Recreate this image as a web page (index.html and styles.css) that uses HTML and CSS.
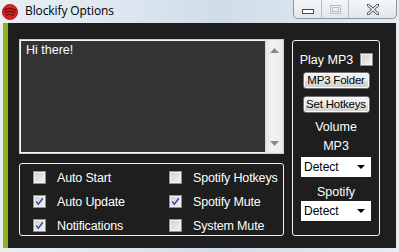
FILE: index.html
```html
<!DOCTYPE html>
<html>
<head>
<meta charset="utf-8">
<link rel="stylesheet" href="styles.css">
</head>
<body>
<div class="window">
  <div class="titlebar">
    <svg class="appicon" width="18" height="18" viewBox="0 0 18 18">
      <circle cx="9" cy="9" r="7.6" fill="#d42424"/>
      <circle cx="9" cy="9" r="7.6" fill="none" stroke="#9a1414" stroke-width="0.8"/>
      <path d="M3.6 6.4 Q9 4.4 14.4 7.2" fill="none" stroke="#7d0f0f" stroke-width="1.6" stroke-linecap="round"/>
      <path d="M4.2 9.2 Q9 7.6 13.6 9.8" fill="none" stroke="#7d0f0f" stroke-width="1.4" stroke-linecap="round"/>
      <path d="M4.8 11.8 Q9 10.6 12.8 12.4" fill="none" stroke="#7d0f0f" stroke-width="1.2" stroke-linecap="round"/>
    </svg>
    <span class="title">Blockify Options</span>
    <div class="caption">
      <div class="cbtn min"><svg width="12" height="5" viewBox="0 0 12 5"><rect x="0.5" y="0.5" width="11" height="4" fill="#fff" stroke="#4a4a4a"/></svg></div>
      <div class="cbtn max"><svg width="11" height="9" viewBox="0 0 11 9"><rect x="0.5" y="0.5" width="10" height="8" fill="none" stroke="#b9bec4"/><rect x="2.5" y="2.5" width="6" height="4" fill="none" stroke="#b9bec4"/></svg></div>
      <div class="cbtn close"><svg width="12" height="11" viewBox="0 0 12 11"><path d="M1 1 L11 10 M11 1 L1 10" stroke="#4a4a4a" stroke-width="3" stroke-linecap="square"/><path d="M1 1 L11 10 M11 1 L1 10" stroke="#fff" stroke-width="1.2"/></svg></div>
    </div>
  </div>
  <div class="frame">
    <div class="client">
      <div class="leftcol">
        <div class="textbox">
          <div class="textarea">Hi there!</div>
          <div class="scrollbar">
            <svg class="arrow" width="9" height="5" viewBox="0 0 9 5"><path d="M4.5 0 L9 5 L0 5Z" fill="#8a8a8a"/></svg>
            <svg class="arrow" width="9" height="5" viewBox="0 0 9 5"><path d="M0 0 L9 0 L4.5 5Z" fill="#8a8a8a"/></svg>
          </div>
        </div>
        <div class="group checks">
          <div class="item"><span class="cb"></span><span>Auto Start</span></div>
          <div class="item"><span class="cb"></span><span>Spotify Hotkeys</span></div>
          <div class="item"><span class="cb on"><svg width="11" height="11" viewBox="0 0 11 11"><path d="M2.2 5.4 L4.4 8.2 L8.8 2.2" fill="none" stroke="#3b54a8" stroke-width="1.6"/></svg></span><span>Auto Update</span></div>
          <div class="item"><span class="cb on"><svg width="11" height="11" viewBox="0 0 11 11"><path d="M2.2 5.4 L4.4 8.2 L8.8 2.2" fill="none" stroke="#3b54a8" stroke-width="1.6"/></svg></span><span>Spotify Mute</span></div>
          <div class="item"><span class="cb on"><svg width="11" height="11" viewBox="0 0 11 11"><path d="M2.2 5.4 L4.4 8.2 L8.8 2.2" fill="none" stroke="#3b54a8" stroke-width="1.6"/></svg></span><span>Notifications</span></div>
          <div class="item"><span class="cb"></span><span>System Mute</span></div>
        </div>
      </div>
      <div class="group panel">
        <div class="playrow"><span>Play MP3</span><span class="cb"></span></div>
        <div class="btn b1">MP3 Folder</div>
        <div class="btn b2">Set Hotkeys</div>
        <div class="lbl l-vol">Volume</div>
        <div class="lbl l-mp3">MP3</div>
        <div class="select s1"><span>Detect</span><svg width="8" height="4" viewBox="0 0 8 4"><path d="M0 0 L8 0 L4 4Z" fill="#000"/></svg></div>
        <div class="lbl l-spot">Spotify</div>
        <div class="select s2"><span>Detect</span><svg width="8" height="4" viewBox="0 0 8 4"><path d="M0 0 L8 0 L4 4Z" fill="#000"/></svg></div>
      </div>
    </div>
  </div>
</div>
</body>
</html>
```
FILE: styles.css
```css
* { box-sizing: border-box; }
html, body { margin: 0; padding: 0; }
body { width: 399px; height: 252px; overflow: hidden; background: #dfe6ec; }

.window {
  width: 399px; height: 252px;
  display: flex; flex-direction: column;
  background: linear-gradient(90deg, #e9eef2 0%, #dde7f0 30%, #cfdde9 55%, #dce6ee 80%, #e6ecf1 100%);
  font-family: "Liberation Sans", Arial, sans-serif;
}

.titlebar {
  height: 23px; flex: none;
  display: flex; align-items: flex-start;
}
.appicon { margin: 3px 0 0 1px; flex: none; }
.title {
  margin: 3px 0 0 6px;
  font-family: "Open Sans", sans-serif;
  font-size: 12px; line-height: 16px; color: #000;
  letter-spacing: -0.1px;
}
.caption {
  margin-left: auto; margin-right: 2px;
  display: flex; height: 19px;
  border: 1px solid #8f969c; border-top: none;
  border-radius: 0 0 5px 5px;
  background: linear-gradient(#f4f6f8, #e2e7ec);
  overflow: hidden;
}
.cbtn { display: flex; align-items: center; justify-content: center; height: 18px; }
.cbtn.min { width: 28px; border-right: 1px solid #b7bdc3; padding-top: 5px; }
.cbtn.max { width: 27px; border-right: 1px solid #b7bdc3; }
.cbtn.close { width: 47px; }

.frame {
  flex: 1; display: flex;
  padding: 0 3px 4px 3px;
}
.client {
  flex: 1;
  background: #1e1e1e;
  border-left: 5px solid #8fb11a;
  display: flex; gap: 8px;
  padding: 16px 16px 12px 11px;
}

.leftcol { width: 265px; display: flex; flex-direction: column; gap: 9px; }
.textbox {
  height: 115px; display: flex;
  border: 1px solid #b8d2ec;
  background: #333;
}
.textarea {
  flex: 1; color: #fff;
  font-size: 12.5px; line-height: 15px;
  padding: 2px 0 0 5px;
  border: 1px solid #f4f8fc;
  border-right: none;
}
.scrollbar {
  width: 18px; background: linear-gradient(90deg, #e6e6e6, #f2f2f2 40%, #ebebeb);
  display: flex; flex-direction: column; justify-content: space-between; align-items: center;
  padding: 8px 0 7px;
  border-left: 1px solid #d8d8d8;
}

.group { border: 1px solid #f2f2f2; border-radius: 3px; }
.checks {
  flex: 1;
  display: grid; grid-template-columns: 136px 1fr;
  grid-auto-rows: 13px; row-gap: 11px;
  padding: 7px 0 0 13px;
}
.item { display: flex; align-items: center; gap: 11px; color: #fff; font-size: 12.5px; white-space: nowrap; }
.item span:last-child { letter-spacing: -0.15px; }
.cb {
  width: 13px; height: 13px; flex: none;
  border: 1px solid #8e8f8f;
  background: linear-gradient(135deg, #cfcfcf, #f4f4f4);
  box-shadow: inset 0 0 0 1px #f4f4f4;
  display: flex; align-items: center; justify-content: center;
}

.panel {
  width: 88px; margin-top: 1px;
  display: flex; flex-direction: column; align-items: center;
  color: #fff; font-size: 12.5px;
}
.playrow { margin-top: 12px; height: 13px; display: flex; align-items: center; gap: 7px; padding-left: 1px; }
.btn {
  width: 67px; height: 17px;
  border: 1px solid #707070; border-radius: 3px;
  background: linear-gradient(#f2f2f2 0%, #ebebeb 50%, #dddddd 51%, #cfcfcf 100%);
  box-shadow: inset 0 0 0 1px #fbfbfb;
  color: #000; font-size: 11.5px; line-height: 15px; text-align: center;
  letter-spacing: -0.2px;
}
.b1 { margin-top: 6px; }
.b2 { margin-top: 7px; }
.lbl { line-height: 15px; }
.l-vol { margin-top: 7px; }
.l-mp3 { margin-top: 4px; }
.select {
  width: 70px; height: 20px; background: #fff; color: #000;
  display: flex; align-items: center; justify-content: space-between;
  padding: 0 6px 0 3px; font-size: 12px;
}
.s1 { margin-top: 3px; }
.l-spot { margin-top: 8px; }
.s2 { margin-top: 1px; }
```
